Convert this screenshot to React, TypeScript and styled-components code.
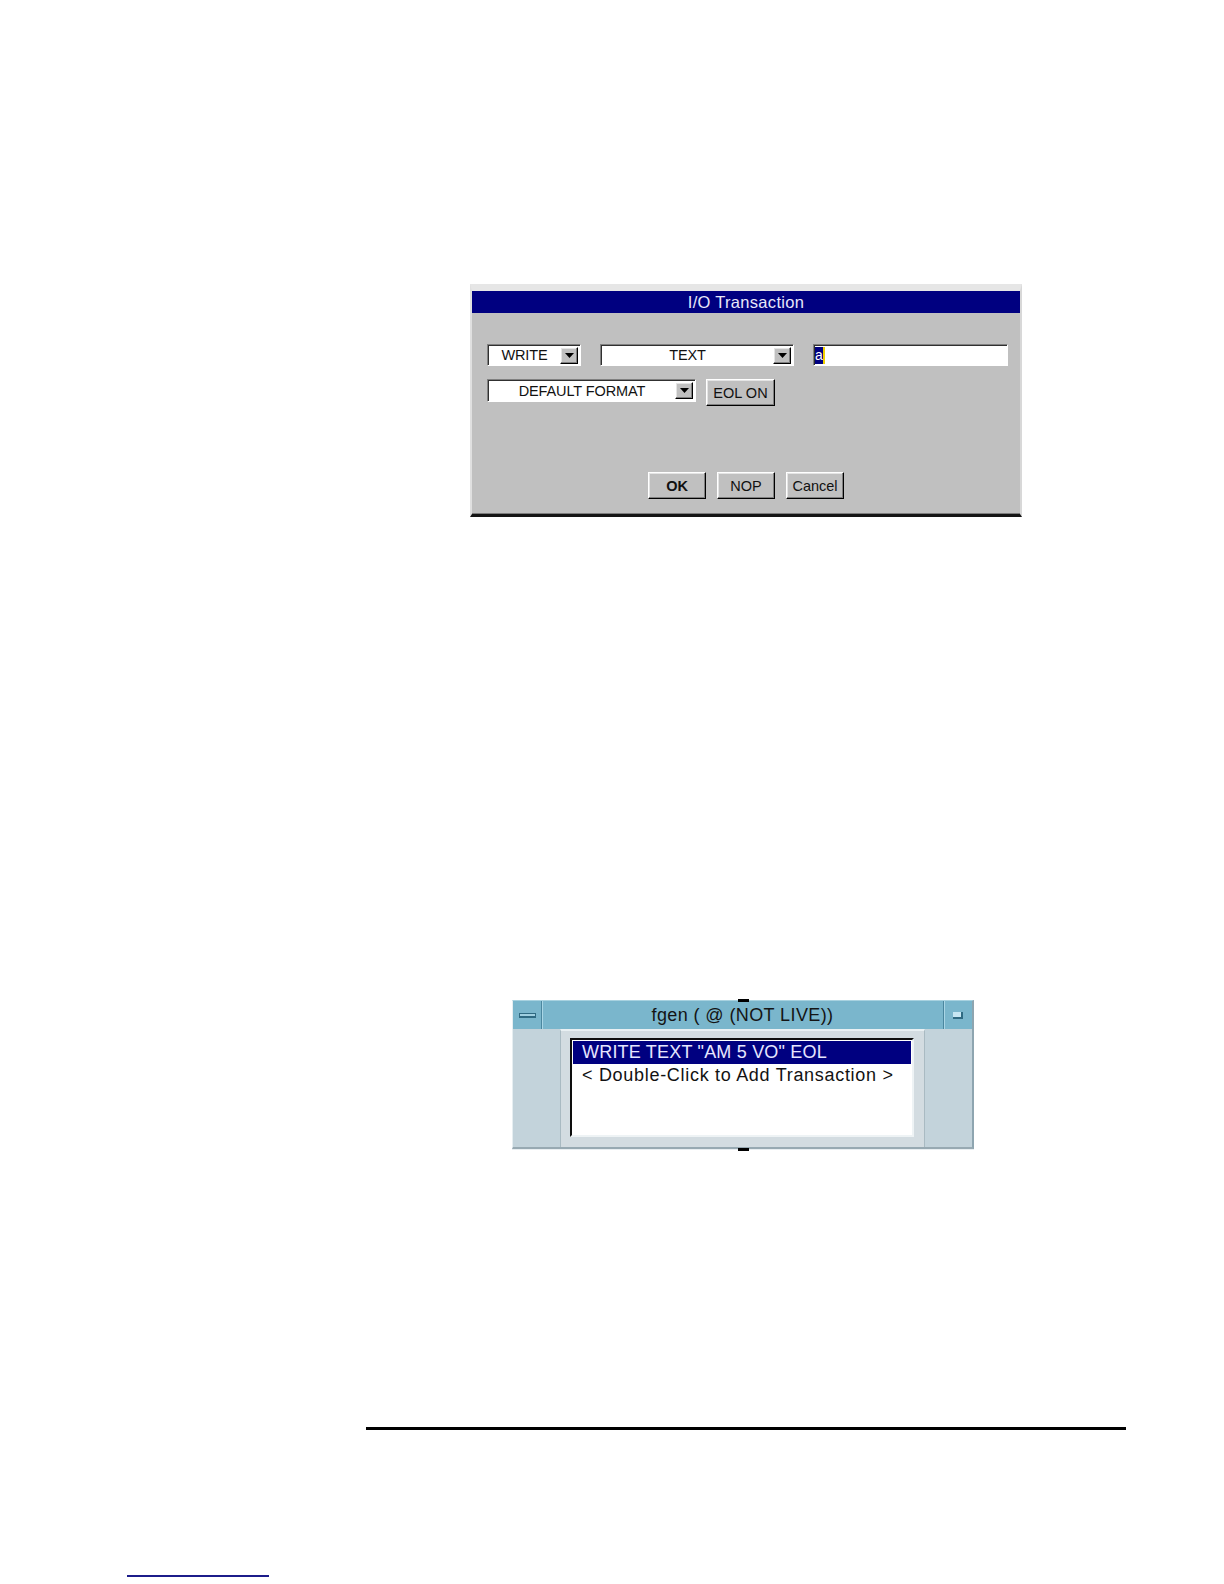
import React from 'react';
import styled, { createGlobalStyle, css } from 'styled-components';

const GlobalStyle = createGlobalStyle`
  html, body {
    margin: 0;
    padding: 0;
    background: #ffffff;
  }
  body {
    font-family: "Liberation Sans", Arial, Helvetica, sans-serif;
  }
  * {
    box-sizing: border-box;
  }
`;

const sunken = css`
  border-top: 1px solid #808080;
  border-left: 1px solid #808080;
  border-bottom: 1px solid #ffffff;
  border-right: 1px solid #ffffff;
  box-shadow: inset 1px 1px 0 #303030;
`;

const raised = css`
  border-top: 1px solid #ffffff;
  border-left: 1px solid #ffffff;
  border-bottom: 1px solid #000000;
  border-right: 1px solid #000000;
  box-shadow: inset -1px -1px 0 #808080, inset 1px 1px 0 #e4e4e4;
`;

function DownArrow() {
  return (
    <svg width="9" height="5" viewBox="0 0 9 5">
      <polygon points="0,0 9,0 4.5,5" fill="#000" />
    </svg>
  );
}

export default function App() {
  return (
    <Page>
      <GlobalStyle />

      <Dialog>
        <DialogTitle>I/O Transaction</DialogTitle>
        <DialogBody>
          <FieldRow $gap={19}>
            <Combo $w={94} $h={22}>
              <ComboLabel>WRITE</ComboLabel>
              <ArrowBtn><DownArrow /></ArrowBtn>
            </Combo>
            <Combo $w={194} $h={22}>
              <ComboLabel>TEXT</ComboLabel>
              <ArrowBtn><DownArrow /></ArrowBtn>
            </Combo>
            <TextInput>
              <Selection>a</Selection>
              <Caret />
            </TextInput>
          </FieldRow>

          <FieldRow $gap={10} $top={13}>
            <Combo $w={209} $h={23}>
              <ComboLabel>DEFAULT FORMAT</ComboLabel>
              <ArrowBtn><DownArrow /></ArrowBtn>
            </Combo>
            <PushButton $w={69}>EOL ON</PushButton>
          </FieldRow>

          <ButtonRow>
            <PushButton $w={58} $bold>OK</PushButton>
            <PushButton $w={58}>NOP</PushButton>
            <PushButton $w={58}>Cancel</PushButton>
          </ButtonRow>
        </DialogBody>
      </Dialog>

      <ObjWindow>
        <TabMark $edge="top" />
        <ObjTitleBar>
          <CornerBtn $side="left">
            <MinGlyph />
          </CornerBtn>
          <ObjTitle>fgen ( @ (NOT LIVE))</ObjTitle>
          <CornerBtn $side="right">
            <MaxGlyph />
          </CornerBtn>
        </ObjTitleBar>
        <ObjBody>
          <SidePanel />
          <CenterPanel>
            <ListBox>
              <ListRow $selected $spacing={0.2}>WRITE TEXT "AM 5 VO" EOL</ListRow>
              <ListRow $spacing={0.7}>&lt; Double-Click to Add Transaction &gt;</ListRow>
            </ListBox>
          </CenterPanel>
          <SidePanel />
        </ObjBody>
        <TabMark $edge="bottom" />
      </ObjWindow>

      <Rule />
      <FootLink />
    </Page>
  );
}

const Page = styled.main`
  width: 1224px;
  min-height: 1584px;
  display: flex;
  flex-direction: column;
  align-items: flex-start;
  overflow: hidden;
  background: #ffffff;
`;

/* ---------- I/O Transaction dialog ---------- */

const Dialog = styled.section`
  margin: 284px 0 0 470px;
  width: 552px;
  height: 233px;
  display: flex;
  flex-direction: column;
  background: #c0c0c0;
  border-top: 7px solid #e6e6e6;
  border-left: 2px solid #e0e0e0;
  border-right: 2px solid #d8d8d8;
  border-bottom: 3px solid #141414;
`;

const DialogTitle = styled.div`
  height: 22px;
  flex-shrink: 0;
  background: #000080;
  color: #e8e8fa;
  font-size: 16.5px;
  letter-spacing: 0.3px;
  line-height: 22px;
  text-align: center;
`;

const DialogBody = styled.div`
  flex: 1;
  display: flex;
  flex-direction: column;
  padding: 31px 15px 14px 15px;
  border-bottom: 1px solid #7c7c7c;
`;

const FieldRow = styled.div<{ $gap: number; $top?: number }>`
  display: flex;
  align-items: flex-start;
  gap: ${p => p.$gap}px;
  margin-top: ${p => p.$top ?? 0}px;

  & > * {
    flex-shrink: 0;
  }
`;

const Combo = styled.div<{ $w: number; $h: number }>`
  ${sunken};
  width: ${p => p.$w}px;
  height: ${p => p.$h}px;
  background: #ffffff;
  display: flex;
  align-items: center;
  padding: 1px 2px 1px 1px;
`;

const ComboLabel = styled.span`
  flex: 1;
  text-align: center;
  font-size: 14.5px;
  letter-spacing: -0.1px;
  color: #111;
  white-space: nowrap;
`;

const ArrowBtn = styled.span`
  ${raised};
  width: 18px;
  height: 17px;
  background: #c0c0c0;
  display: flex;
  align-items: center;
  justify-content: center;
`;

const TextInput = styled.div`
  ${sunken};
  width: 195px;
  height: 22px;
  background: #ffffff;
  display: flex;
  align-items: stretch;
  padding: 2px 0 1px 1px;
`;

const Selection = styled.span`
  width: 8px;
  background: #000080;
  color: #ffffff;
  font-size: 14px;
  line-height: 17px;
  text-align: center;
`;

const Caret = styled.span`
  width: 2px;
  background: #f0d000;
`;

const PushButton = styled.button<{ $w: number; $bold?: boolean }>`
  ${raised};
  width: ${p => p.$w}px;
  height: 27px;
  padding: 0;
  background: #c0c0c0;
  color: #111;
  font-family: "Liberation Sans", Arial, sans-serif;
  font-size: 14.5px;
  font-weight: ${p => (p.$bold ? 700 : 400)};
  cursor: default;
`;

const ButtonRow = styled.div`
  margin-top: auto;
  display: flex;
  justify-content: center;
  gap: 11px;
`;

/* ---------- fgen object window ---------- */

const ObjWindow = styled.section`
  position: relative;
  margin: 483px 0 0 512px;
  width: 462px;
  height: 149px;
  display: flex;
  flex-direction: column;
  border-top: 1px solid #a8d2e0;
  border-left: 1px solid #e6eef1;
  border-right: 2px solid #8ea5b0;
  border-bottom: 2px solid #97a9b2;
  box-shadow: 0 1px 0 #e8eef1;
`;

const TabMark = styled.span<{ $edge: 'top' | 'bottom' }>`
  position: absolute;
  left: 225px;
  width: 11px;
  height: 3px;
  background: #000;
  ${p => (p.$edge === 'top' ? 'top: -2px;' : 'bottom: -4px;')}
`;

const ObjTitleBar = styled.div`
  height: 28px;
  flex-shrink: 0;
  display: flex;
  align-items: stretch;
  background: #7ab6cc;
`;

const CornerBtn = styled.span<{ $side: 'left' | 'right' }>`
  width: 29px;
  display: flex;
  align-items: center;
  justify-content: center;
  ${p =>
    p.$side === 'left'
      ? 'border-right: 1px solid #4b879f; box-shadow: 1px 0 0 #a9d6e6;'
      : 'border-left: 1px solid #4b879f; box-shadow: inset 1px 0 0 #a9d6e6;'}
`;

const MinGlyph = styled.span`
  width: 17px;
  height: 5px;
  background: #9fcfe0;
  border: 1px solid #2f6a82;
  border-bottom-width: 2px;
`;

const MaxGlyph = styled.span`
  width: 10px;
  height: 7px;
  background: #c6e6f2;
  border-right: 2px solid #2f6a82;
  border-bottom: 2px solid #2f6a82;
`;

const ObjTitle = styled.div`
  flex: 1;
  text-align: center;
  font-size: 18px;
  letter-spacing: 0.4px;
  line-height: 28px;
  color: #141414;
  white-space: nowrap;
`;

const ObjBody = styled.div`
  flex: 1;
  display: flex;
  background: #c3d3db;
`;

const SidePanel = styled.div`
  width: 47px;
  flex-shrink: 0;
  background: #c3d3db;
`;

const CenterPanel = styled.div`
  flex: 1;
  display: flex;
  padding: 7px 10px 10px 9px;
  background: #d3dce1;
  border-top: 2px solid #e9f0f3;
  border-left: 1px solid #a9bac2;
  border-right: 1px solid #a9bac2;
`;

const ListBox = styled.div`
  flex: 1;
  background: #ffffff;
  padding: 1px;
  border-top: 2px solid #0e0e0e;
  border-left: 2px solid #0e0e0e;
  border-bottom: 2px solid #eef3f5;
  border-right: 2px solid #eef3f5;
`;

const ListRow = styled.div<{ $selected?: boolean; $spacing: number }>`
  height: 23px;
  padding-left: 9px;
  font-size: 18px;
  letter-spacing: ${p => p.$spacing}px;
  line-height: 23px;
  white-space: nowrap;
  background: ${p => (p.$selected ? '#000080' : 'transparent')};
  color: ${p => (p.$selected ? '#e6e6ff' : '#121212')};
`;

/* ---------- page furniture ---------- */

const Rule = styled.hr`
  margin: 278px 0 0 366px;
  width: 760px;
  height: 3px;
  border: 0;
  background: #000;
`;

const FootLink = styled.span`
  display: block;
  margin: 145px 0 0 127px;
  width: 142px;
  height: 2px;
  background: #1c1c8a;
`;
